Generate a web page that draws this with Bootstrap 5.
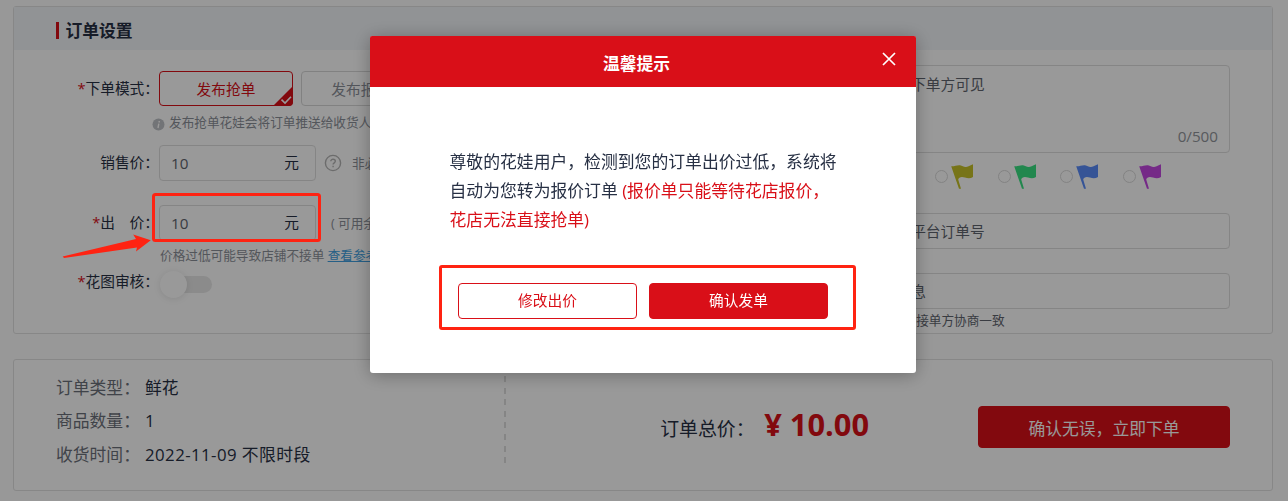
<!DOCTYPE html>
<html lang="zh-CN">
<head>
  <meta charset="UTF-8" />
  <meta name="viewport" content="width=device-width, initial-scale=1.0"/>
  <title>订单设置</title>
  <link href="https://cdn.jsdelivr.net/npm/bootstrap@5.3.2/dist/css/bootstrap.min.css" rel="stylesheet" />
  <style>
    body {
      background-color: #fdfdfd;
      color: #273044;
      font-family: "Open Sans", "Noto Sans CJK SC", sans-serif;
      font-size: 14.7px;
      line-height: 20px;
      overflow: hidden;
    }

    .page {
      padding: 6px 15px 0 13px;
    }

    .panel {
      background-color: #fff;
      border: 1px solid #e2e2e2;
      border-radius: 3px;
    }

    .settings-panel {
      height: 328px;
    }

    .panel-title {
      height: 43px;
      padding: 4px 0 0 42px;
      background-color: #f2f5f8;
      font-size: 16.8px;
      font-weight: 700;
    }

    .title-bar {
      width: 3px;
      height: 17px;
      margin-right: 6.5px;
      background-color: #d90f18;
    }

    .left-form {
      width: 670px;
      padding-top: 21px;
    }

    .field-label {
      width: 145px;
      flex: none;
      padding-bottom: 2px;
      text-align: right;
      white-space: nowrap;
    }

    .star {
      color: #d90f18;
    }

    .mode-btn {
      position: relative;
      width: 134px;
      height: 35px;
      border: 1px solid #d8d8d8;
      border-radius: 4px;
      color: #8b8f98;
      background: none;
    }

    .mode-btn.selected {
      border-color: #d90f18;
      color: #d90f18;
    }

    .mode-btn svg {
      position: absolute;
      right: -1px;
      bottom: -1px;
    }

    .hint {
      font-size: 12.65px;
      line-height: 18px;
      color: #8b8f98;
      white-space: nowrap;
    }

    .mode-hint {
      padding: 7px 0 1px 138px;
    }

    .field-box {
      height: 36px;
      border: 1px solid #dedede;
      border-radius: 4px;
      padding: 0 11px;
      color: #60646e;
    }

    .price-box {
      width: 157px;
      padding-right: 16px;
    }

    .price-box .amount {
      font-size: 15.2px;
    }

    .price-box .unit {
      padding-bottom: 3px;
      color: #273044;
    }

    .ref-link {
      color: #409fe0;
      text-decoration: underline;
    }

    .toggle {
      width: 54px;
      height: 28px;
      padding-left: 1px;
    }

    .toggle-track {
      width: 39px;
      height: 17px;
      margin-left: -14px;
      background-color: #e8e8e8;
      border-radius: 9px;
    }

    .toggle-knob {
      z-index: 1;
      width: 27px;
      height: 27px;
      background-color: #fff;
      border-radius: 50%;
      box-shadow: 0 1px 7px rgba(0, 0, 0, 0.1);
    }

    .right-form {
      width: 546px;
      padding-top: 15px;
    }

    .right-fields {
      width: 419px;
    }

    .note-box {
      height: 88px;
      padding: 8px 11px 6px;
    }

    .note-count {
      color: #92959b;
      font-size: 15.2px;
    }

    .flag-item {
      width: 62.5px;
    }

    .radio-dot {
      width: 13px;
      height: 13px;
      border: 1px solid #dadada;
      border-radius: 50%;
      margin-right: 3px;
    }

    .summary-panel {
      height: 132px;
      margin-top: 25px;
      padding: 0 42px;
    }

    .summary-list {
      width: 448px;
      padding-top: 11px;
      font-size: 16.8px;
      line-height: 33.4px;
    }

    .summary-list .key {
      width: 89px;
      color: #6c707a;
    }

    .summary-list .date {
      letter-spacing: 0.45px;
    }

    .dash-line {
      width: 2px;
      height: 91px;
      margin-top: 14px;
      background: repeating-linear-gradient(transparent 0 2px, #dedede 2px 8px, transparent 8px 11.6px);
    }

    .total-label {
      width: 104px;
      padding-top: 8px;
      font-size: 18.9px;
    }

    .total-price {
      color: #d90f18;
      font-size: 30.8px;
      font-weight: 700;
      line-height: 40px;
      padding-bottom: 2px;
    }

    .submit-btn {
      width: 252px;
      height: 42px;
      border-radius: 4px;
      font-size: 16.8px;
    }

    .btn-brand,
    .btn-brand:hover {
      background-color: #d90f18;
      border-color: #d90f18;
      color: #fff;
    }

    .btn-brand-outline {
      background-color: #fff;
      border-color: #d90f18;
      color: #d90f18;
    }

    .modal-backdrop.show {
      opacity: 0.4;
    }

    .tip-dialog {
      width: 546px;
      max-width: none;
      margin: 36px 0 0 370px;
    }

    .tip-dialog .modal-content {
      height: 336.5px;
      border: 0;
      border-radius: 3px;
      color: #273044;
      box-shadow: 0 2px 18px rgba(0, 0, 0, 0.3);
    }

    .tip-dialog .modal-header {
      height: 51px;
      padding: 0 19.5px;
      border: 0;
      border-radius: 2px 2px 0 0;
      background-color: #d90f18;
      color: #fff;
    }

    .tip-dialog .modal-title {
      padding: 4px 0 0 3px;
      font-size: 16.8px;
      line-height: 24px;
      font-weight: 700;
    }

    .tip-dialog .modal-body {
      padding: 60px 0 0 79.5px;
    }

    .tip-text {
      width: 392px;
      font-size: 16.83px;
      line-height: 29px;
      white-space: nowrap;
    }

    .tip-text span {
      color: #d90f18;
    }

    .tip-actions {
      gap: 12px;
      width: 417px;
      height: 65px;
      margin: 31px 0 0 -10.5px;
      padding: 6px 0 0 16px;
      border: 3px solid #ff2312;
      border-radius: 3px;
    }

    .tip-actions .btn {
      width: 179px;
      height: 36px;
      padding: 0;
      border-radius: 4px;
      font-size: 14.7px;
    }

    /* red marks drawn above the backdrop */
    .mark-layer {
      position: absolute;
      z-index: 1060;
      left: 60px;
      top: 190px;
    }
  </style>
</head>
<body>
  <div class="page">
    <div class="panel settings-panel">
      <div class="panel-title d-flex align-items-center">
        <span class="title-bar"></span>订单设置
      </div>
      <div class="d-flex">
        <div class="left-form">
          <div class="d-flex align-items-center">
            <div class="field-label"><span class="star">*</span>下单模式：</div>
            <div class="d-flex gap-2">
              <div class="mode-btn selected d-flex align-items-center justify-content-center">
                发布抢单
                <svg width="20" height="20" viewBox="0 0 20 20">
                  <path d="M20 0v16a4 4 0 0 1-4 4H0z" fill="#d90f18"/>
                  <path d="M8.5 13.7l3.5 3.3 6-6.3" fill="none" stroke="#fff" stroke-width="1.6"/>
                </svg>
              </div>
              <div class="mode-btn d-flex align-items-center justify-content-center">发布报价单</div>
            </div>
          </div>
          <div class="hint mode-hint d-flex align-items-center">
            <svg class="me-1 mt-1" width="13" height="13" viewBox="0 0 13 13">
              <circle cx="6.5" cy="6.5" r="6" fill="#bfc1c6"/>
              <path d="M7.2 3v1.4M6.8 5.6L6 10" stroke="#fff" stroke-width="1.4"/>
            </svg>
            发布抢单花娃会将订单推送给收货人附近的花店
          </div>
          <div class="d-flex align-items-center" style="margin-top: 13px">
            <div class="field-label">销售价：</div>
            <div class="field-box price-box d-flex align-items-center justify-content-between">
              <span class="amount">10</span><span class="unit">元</span>
            </div>
            <svg class="ms-2" width="18" height="18" viewBox="0 0 18 18" fill="none" stroke="#b5b5b5">
              <circle cx="9" cy="9" r="7.6" stroke-width="1.4"/>
              <path d="M6.8 7.3c0-2.9 4.5-2.7 4.5 0 0 1.6-2.2 1.5-2.2 3.3M9.1 11.8v1.5" stroke-width="1.4"/>
            </svg>
            <span class="hint" style="margin-left: 10px">非必填</span>
          </div>
          <div class="d-flex align-items-center" style="margin-top: 24px">
            <div class="field-label"><span class="star">*</span>出　价：</div>
            <div class="field-box price-box d-flex align-items-center justify-content-between">
              <span class="amount">10</span><span class="unit">元</span>
            </div>
            <span class="hint" style="margin-left: 15px">( 可用余额 )</span>
          </div>
          <div class="hint" style="padding: 5px 0 1px 146px">
            价格过低可能导致店铺不接单 <span class="ref-link">查看参考价格</span>
          </div>
          <div class="d-flex align-items-center" style="margin-top: 5px">
            <div class="field-label" style="margin-top: -4px"><span class="star">*</span>花图审核：</div>
            <div class="toggle d-flex align-items-center">
              <div class="toggle-knob"></div>
              <div class="toggle-track"></div>
            </div>
          </div>
        </div>

        <div class="right-form d-flex">
          <div class="field-label" style="width: 127px">
            <div style="padding-top: 9px">备注：</div>
          </div>
          <div class="right-fields">
            <div class="field-box note-box d-flex flex-column justify-content-between">
              <span>该备注内容仅下单方可见</span>
              <span class="note-count text-end">0/500</span>
            </div>
            <div class="d-flex" id="flags" style="margin: 10px 0 0 -1px"></div>
            <div class="field-box d-flex align-items-center" style="margin-top: 24px">请输入第三方平台订单号</div>
            <div class="field-box d-flex align-items-center" style="margin-top: 24px">请输入配送信息</div>
            <div class="hint" style="padding: 2px 0 0 4px; color: #60646e">如需修改信息请与接单方协商一致</div>
          </div>
        </div>
      </div>
    </div>

    <div class="panel summary-panel d-flex">
      <div class="summary-list">
        <div class="d-flex"><span class="key">订单类型：</span><span>鲜花</span></div>
        <div class="d-flex"><span class="key">商品数量：</span><span>1</span></div>
        <div class="d-flex"><span class="key">收货时间：</span><span class="date">2022-11-09 不限时段</span></div>
      </div>
      <div class="dash-line"></div>
      <div class="d-flex align-items-center ms-auto">
        <div class="total-label">订单总价：</div>
        <div class="total-price">¥ 10.00</div>
      </div>
      <div class="d-flex align-items-center" style="margin-left: 109px; padding-top: 4px">
        <button class="btn btn-brand submit-btn px-0 pb-0 pt-1">确认无误，立即下单</button>
      </div>
    </div>
  </div>

  <div class="modal-backdrop show"></div>

  <div class="modal d-block" tabindex="-1">
    <div class="modal-dialog tip-dialog">
      <div class="modal-content">
        <div class="modal-header">
          <h5 class="modal-title flex-grow-1 text-center">温馨提示</h5>
          <svg style="margin-top: -5px" width="16" height="16" viewBox="0 0 16 16" stroke="#fff" stroke-width="1.7">
            <path d="M2 2l12 12M14 2L2 14"/>
          </svg>
        </div>
        <div class="modal-body">
          <div class="tip-text">
            尊敬的花娃用户，检测到您的订单出价过低，系统将<br>
            自动为您转为报价订单 <span>(报价单只能等待花店报价，<br>花店无法直接抢单)</span>
          </div>
          <div class="tip-actions d-flex align-items-center">
            <button class="btn btn-brand-outline">修改出价</button>
            <button class="btn btn-brand">确认发单</button>
          </div>
        </div>
      </div>
    </div>
  </div>

  <svg class="mark-layer" width="264" height="72" viewBox="60 190 264 72">
    <rect x="153.5" y="194.5" width="166" height="46" rx="2" fill="none" stroke="#ff2312" stroke-width="3"/>
    <path d="M62.7 256.5L136 239l-2.8-4.4 17.6 5.7L136 251.4l1-4-73 10.6z" fill="#ff2312"/>
  </svg>

  <script src="https://cdn.jsdelivr.net/npm/bootstrap@5.3.2/dist/js/bootstrap.bundle.min.js"></script>
  <script>
    const flagColors = ["#d90f18", "#f08a24", "#c6c228", "#3ae282", "#5b8dfb", "#c347e2"];
    const flagBox = document.getElementById("flags");

    flagColors.forEach(color => {
      const item = document.createElement("div");
      item.className = "flag-item d-flex align-items-center";
      item.innerHTML = `
        <span class="radio-dot"></span>
        <svg width="23" height="26" viewBox="0 0 23 26" fill="${color}">
          <path d="M.2 3.3C3.500 3.600 5.500 2 9 2.300c2.500.3 3.500 1.900 6 1.700 3-.2 4.500-1.900 7-2.700V14c-2.500 1.500-5 1.500-8 .5-3.500-1.200-6.300-.4-6.800 2L10 25.700H8z"/>
        </svg>
      `;
      flagBox.appendChild(item);
    });
  </script>
</body>
</html>
